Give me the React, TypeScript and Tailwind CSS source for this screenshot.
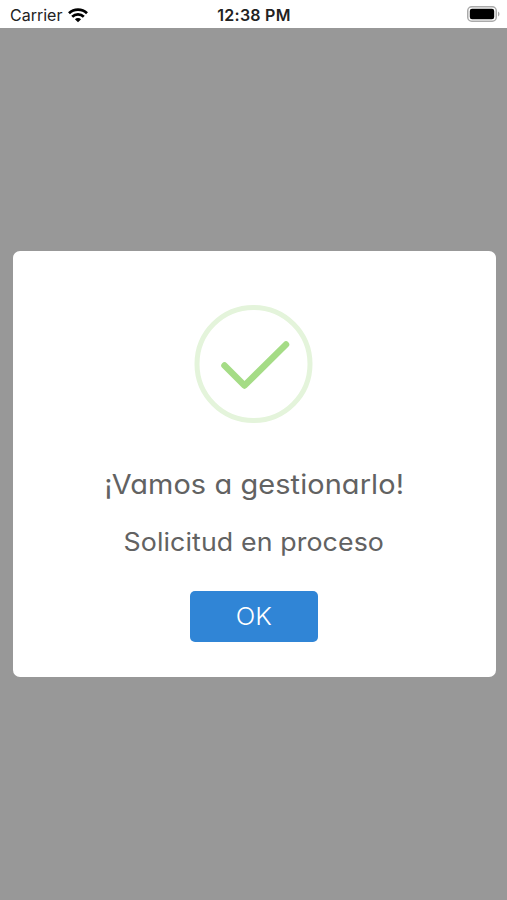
import { ReactNode } from "react";

export default function App() {
  return (
    <div className="flex h-[900px] w-[507px] flex-col overflow-hidden bg-[#989898]">
      <StatusBar />
      <main className="pt-[223px] pr-[11.5px] pl-[12.5px]">
        <SuccessDialog title="¡Vamos a gestionarlo!" message="Solicitud en proceso">
          OK
        </SuccessDialog>
      </main>
    </div>
  );
}

function StatusBar() {
  return (
    <header className="grid h-7 shrink-0 grid-cols-3 items-center bg-white pr-[7px] pl-2.5 font-['Inter',sans-serif] text-[#222]">
      <div className="flex items-center gap-1.5 pt-0.5">
        <span className="text-[16px] leading-5">Carrier</span>
        <WifiIcon />
      </div>
      <span className="-ml-0.5 pt-0.5 text-center text-[16px] leading-5 font-semibold tracking-[0.25px] whitespace-nowrap">12:38 PM</span>
      <div className="flex justify-end">
        <BatteryIcon />
      </div>
    </header>
  );
}

function SuccessDialog({ title, message, children }: { title: string; message: string; children: ReactNode }) {
  return (
    <section
      role="dialog"
      className="flex h-[426px] flex-col items-center rounded-[7px] bg-white pt-[54px] font-['Inter',sans-serif] text-[#626262] [font-feature-settings:'cv11']"
    >
      <CheckIcon />
      <h2 className="mt-[43px] scale-x-[1.07] text-[27px] leading-9 font-normal tracking-[0.1px] whitespace-nowrap">{title}</h2>
      <p className="mt-[20.5px] scale-x-[1.07] text-[25px] leading-9 font-normal tracking-[0.1px] whitespace-nowrap">{message}</p>
      <button type="button" className="mt-[31.5px] mr-px h-[51px] w-[128px] rounded-[5px] bg-[#3085d6] text-[24px] font-light text-white">
        <span className="inline-block scale-x-[1.07]">{children}</span>
      </button>
    </section>
  );
}

function CheckIcon() {
  return (
    <svg width="119" height="119" viewBox="0 0 119 119" fill="none" className="mr-px shrink-0">
      <circle cx="59.5" cy="59" r="56.5" stroke="#e4f4db" strokeWidth="5" />
      <path d="M30.5 60.5 50.5 80.5 92 39.5" stroke="#a5dc86" strokeWidth="6.5" strokeLinecap="round" strokeLinejoin="round" />
    </svg>
  );
}

function WifiIcon() {
  return (
    <svg width="20" height="15" viewBox="0 0 20 15" fill="none" stroke="#000" strokeWidth="2.7">
      <path d="M1 5.3a12.8 12.8 0 0 1 18 0" />
      <path d="M4.2 8.7a8.2 8.2 0 0 1 11.6 0" />
      <path d="M6.9 11.2a4.4 4.4 0 0 1 6.2 0L10 14.3Z" fill="#000" stroke="none" />
    </svg>
  );
}

function BatteryIcon() {
  return (
    <svg width="33" height="16" viewBox="0 0 33 16" fill="none">
      <rect x="0.75" y="0.75" width="28.5" height="14.5" rx="4" stroke="#aaa" strokeWidth="1.5" />
      <rect x="2.8" y="2.8" width="24.4" height="10.4" rx="2.2" fill="#000" />
      <path d="M31 5.5c2 1 2 4 0 5Z" fill="#aaa" />
    </svg>
  );
}
